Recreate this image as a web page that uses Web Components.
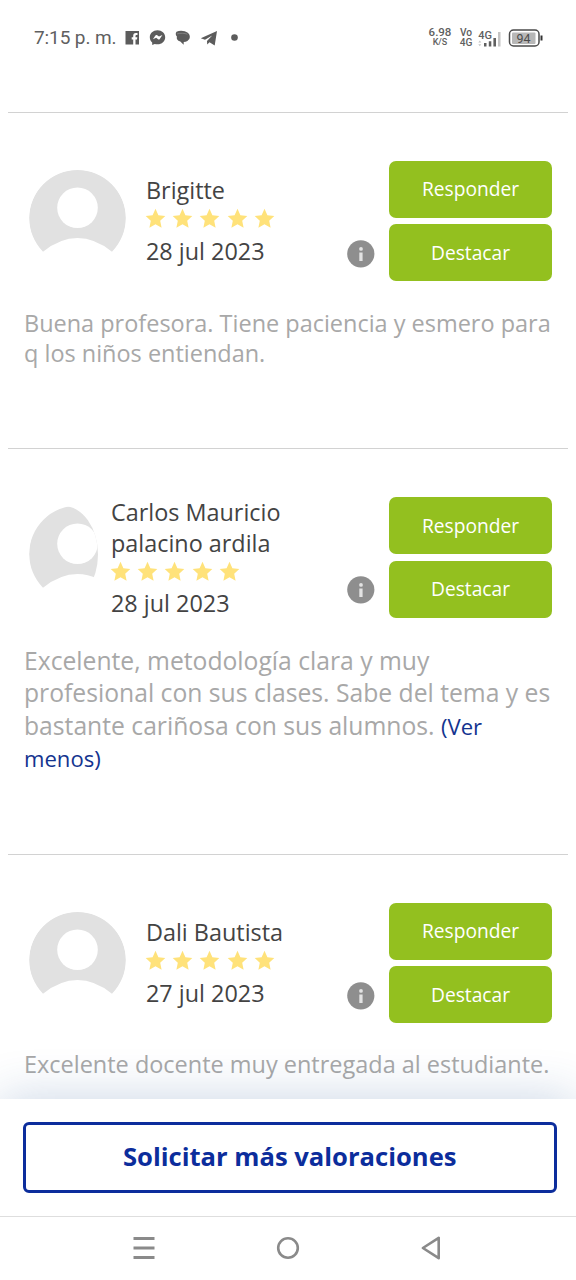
<!DOCTYPE html>
<html lang="es">
<head>
<meta charset="utf-8">
<title>Valoraciones</title>
<style>
html,body{margin:0;height:100%;background:#fff}
body{font-family:"Open Sans","Noto Sans",sans-serif;overflow:hidden}
</style>
</head>
<body>
<reviews-app></reviews-app>
<script>
const define=(name,html,setup)=>customElements.define(name,class extends HTMLElement{
  connectedCallback(){
    if(this.shadowRoot)return;
    this.attachShadow({mode:'open'}).innerHTML=html;
    if(setup)setup(this,this.shadowRoot);
  }
});

define('status-bar',`<style>
:host{display:flex;box-sizing:border-box;height:76px;padding:0 33px 0 34px;align-items:center;justify-content:space-between;font-family:Roboto,sans-serif;color:#606060}
.l,.r{display:flex;align-items:center}
.time{font-size:19px;line-height:24px;letter-spacing:-.1px;width:91px;white-space:nowrap}
svg{display:block}
.s{text-align:center;font-weight:500;white-space:nowrap}
.s span{display:block}
.speed{width:24px;margin-right:7px;margin-left:-1px;padding-bottom:3px}
.speed .n{font-size:11.500px;line-height:11px}.speed .u{font-size:9px;line-height:9px}
.vo{width:14px;margin-right:5px}.vo span{line-height:10px;font-size:10.200px}
.sig{width:23px;height:20px;margin-right:7px}
</style>
<div class="l"><span class="time">7:15 p. m.</span>
<svg width="116" height="20" viewBox="125 28 116 20" fill="#5c5c5c">
<path fill-rule="evenodd" d="M125.500 31h13.500v13.500H135.500V39.500h1.500l.3-2.200h-1.800v-1.100c0-.8.3-1.200 1.100-1.200h.9V33h-1.600c-2 0-2.700 1.200-2.700 3v1.300h-1.500v2.200h1.500v5h-7.700z"/>
<path fill-rule="evenodd" d="M157.500 30.200c-4.400 0-7.700 3-7.700 7 0 2.100.9 3.900 2.400 5.200v2.600l2.500-1.100c.9.300 1.800.4 2.800.4 4.400 0 7.700-3.100 7.700-7.100s-3.300-7-7.700-7zm-4.600 9 2.500-3.700c.5-.7 1.200-.7 1.800-.3l1.800 1.400 3.400-1.600-2.600 3.900c-.4.6-1.100.7-1.700.3l-1.900-1.500z"/>
<path d="M176.500 31.800c3-1.700 8.500-1.300 11.300 1 2.900 2.400 2.700 6.400-.4 8.100-1.100.6-2.300.9-3.700 1v2.800l-3.400-3.200c-3-.9-4-2.500-3.400-5-1.200-1.100-1.700-3.300-.4-4.700z"/><path d="M177 33.900c3-.9 7.500-.8 10.500.3" fill="none" stroke="#999" stroke-width=".6"/>
<path d="m200.800 38.200 16.200-7.200-2.300 14.500-5.200-3.200-2.300 2.200-.2-3.600 5.200-5.300-7.200 4.200z"/>
<circle cx="234.500" cy="37.500" r="3.300"/>
</svg></div>
<div class="r"><div class="s speed"><span class="n">6.98</span><span class="u">K/S</span></div><div class="s vo"><span>Vo</span><span>4G</span></div>
<svg class="sig" viewBox="478 27 23 20" fill="#606060"><text x="478.300" y="37.500" font-size="11" font-weight="500">4G</text><path d="M484 42h2.500v3.500H484zM488.800 40.200h2.500v5.300h-2.500zM493.400 37h2.600v8.500h-2.600z"/><path fill="#c4c4c4" d="M498 31h2.500v14.500H498zM478.300 41.500l1.500-2 1.500 2zM478.300 43.300l1.500 2 1.500-2z"/></svg>
<svg width="35" height="20" viewBox="508 27.500 35 20"><rect x="509.500" y="29.500" width="29.500" height="16" rx="4" fill="#fff" stroke="#4b4b4b" stroke-width="1.500"/><rect x="512" y="32" width="23.500" height="11.500" rx="1" fill="#b8b8b8"/><path fill="#333" d="M540.500 35h2v5h-2z"/><text x="523.500" y="42" font-size="12.500" text-anchor="middle" fill="#4c4c4c">94</text></svg></div>`);

define('user-avatar',`<style>
:host{display:block;height:97px;width:97px;border-radius:50%;overflow:hidden;flex:none}
:host([narrow]){width:69px}
svg{display:block}
</style><svg width="97" height="97" viewBox="0 0 97 97"><path d="M14 81.700A48.300 48.300 0 1 1 83 81.700Q48.500 54.500 14 81.700z" fill="#e1e1e1"/><circle cx="48.500" cy="37.800" r="20.300" fill="#fff"/></svg>`);

define('star-rating',`<style>:host{display:flex;gap:6.200px;height:22px;align-items:center}svg{display:block;flex:none}</style>`
+'<svg width="21" height="21" viewBox="0 0 21 21"><path d="m10.500.8 2.900 6.400 6.900.8-5.100 4.800 1.400 6.900-6.100-3.500-6.100 3.500 1.400-6.900L.700 8l6.900-.8z" fill="#ffe27a"/></svg>'.repeat(5));

define('action-button',`<style>:host{display:flex;box-sizing:border-box;width:163px;height:57px;border-radius:7px;background:#93c01f;color:#fff;align-items:center;justify-content:center;font-size:19.200px;line-height:26px}</style><span><slot></slot></span>`);

define('info-badge',`<style>:host{display:block;width:28px;height:28px}svg{display:block}</style><svg width="28" height="28"><circle cx="13.800" cy="13.800" r="13.600" fill="#8e8e8e"/><circle cx="14" cy="8.900" r="1.900" fill="#e3e3e3"/><path d="M12.300 12.500h3.300v8.500h-3.300z" fill="#e3e3e3"/></svg>`);

define('review-card',`<style>
:host{display:block;box-sizing:border-box;margin:0 8px;padding:48px 16px 0;border-top:1px solid #d2d2d2}
.head{display:grid;grid-template-columns:auto 1fr 28px 177px;height:120px;padding-left:5px}
user-avatar{margin-top:9px}
.who{display:flex;flex-direction:column;justify-content:center;margin-left:20px;color:#434343;font-size:23.400px;line-height:30.500px;white-space:nowrap}
:host([narrow]) .who{margin-left:13px}
star-rating{margin:2px 0 6px -1px}
.date{line-height:31px}
info-badge{margin-top:79px}
.actions{display:flex;flex-direction:column;gap:6.500px;margin-left:14px;width:163px}
.body{color:#a8a8a8;font-size:var(--fs,23.480px);white-space:nowrap;line-height:var(--lh,30.500px);margin-top:var(--gap,26px)}
</style><div class="head"><user-avatar></user-avatar><div class="who"><slot name="name"></slot><star-rating></star-rating><div class="date"><slot name="date"></slot></div></div><info-badge></info-badge><div class="actions"><action-button>Responder</action-button><action-button>Destacar</action-button></div></div><div class="body"><slot></slot></div>`,
(h,r)=>{if(h.hasAttribute('narrow'))r.querySelector('user-avatar').setAttribute('narrow','')});

define('request-footer',`<style>
:host{display:block;box-sizing:border-box;height:117px;padding:22.500px 19px 0 22.500px;background:#fff;box-shadow:0 0 50px rgba(28,78,145,.24);position:relative}
.b{display:flex;box-sizing:border-box;height:71.500px;border:3px solid #0c2d9c;border-radius:6px;align-items:center;justify-content:center;color:#0c2d9c;font-weight:700;font-size:25.600px;line-height:34px;white-space:nowrap}
</style><div class="b"><span><slot></slot></span></div>`);

define('nav-bar',`<style>:host{display:flex;box-sizing:border-box;height:64px;border-top:1px solid #dedede;background:#fff;align-items:center;justify-content:center;gap:116px;padding-bottom:2px;position:relative}svg{display:block}</style>
<svg width="28" height="28" fill="none" stroke="#8a8a8a" stroke-width="2.800"><path d="M3.500 4.500h21M3.500 14h21M3.500 23.500h21"/></svg>
<svg width="28" height="28" fill="none" stroke="#8a8a8a" stroke-width="2.600"><circle cx="14" cy="14" r="9.800"/></svg>
<svg width="28" height="28" fill="none" stroke="#8a8a8a" stroke-width="2.600" stroke-linejoin="round"><path d="M20.700 3.800v20.400L4.900 14z"/></svg>`);

define('reviews-app',`<style>
:host{display:flex;flex-direction:column;height:1280px;width:576px;overflow:hidden}
main{height:1023px;flex:none;overflow:hidden;padding-top:35.500px;box-sizing:border-box}
.a{height:336.500px;--gap:27.100px}.b{height:405.900px;--lh:32.600px;--fs:24.700px;--gap:27.500px}
a{color:#14348f;font-size:22.100px;line-height:1}
</style><status-bar></status-bar><main>
<review-card class="a"><span slot="name">Brigitte</span><span slot="date">28 jul 2023</span>Buena profesora. Tiene paciencia y esmero para<br>q los niños entiendan.</review-card>
<review-card class="b" narrow><span slot="name">Carlos Mauricio<br>palacino ardila</span><span slot="date">28 jul 2023</span>Excelente, metodología clara y muy<br>profesional con sus clases. Sabe del tema y es<br>bastante cariñosa con sus alumnos. <a>(Ver<br>menos)</a></review-card>
<review-card><span slot="name">Dali Bautista</span><span slot="date">27 jul 2023</span>Excelente docente muy entregada al estudiante.</review-card>
</main><request-footer>Solicitar más valoraciones</request-footer><nav-bar></nav-bar>`);
</script>
</body>
</html>
